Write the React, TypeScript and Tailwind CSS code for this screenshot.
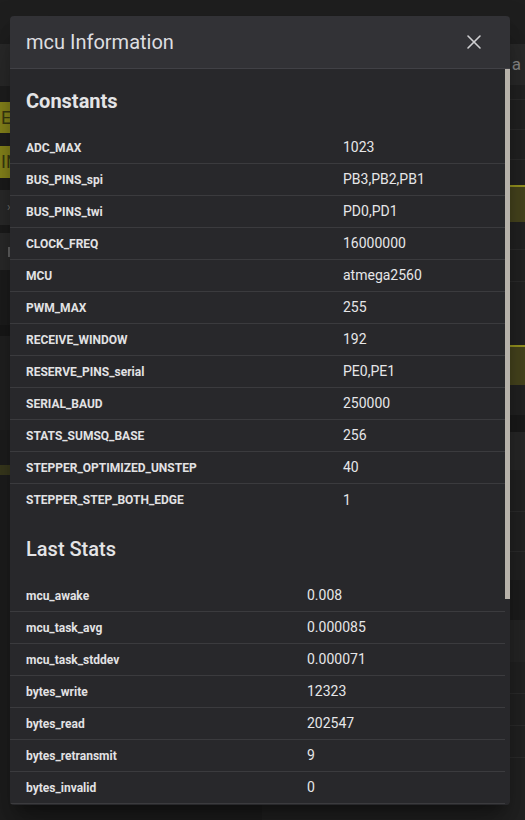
import { X } from "lucide-react";

const constants = [
  ["ADC_MAX", "1023"],
  ["BUS_PINS_spi", "PB3,PB2,PB1"],
  ["BUS_PINS_twi", "PD0,PD1"],
  ["CLOCK_FREQ", "16000000"],
  ["MCU", "atmega2560"],
  ["PWM_MAX", "255"],
  ["RECEIVE_WINDOW", "192"],
  ["RESERVE_PINS_serial", "PE0,PE1"],
  ["SERIAL_BAUD", "250000"],
  ["STATS_SUMSQ_BASE", "256"],
  ["STEPPER_OPTIMIZED_UNSTEP", "40"],
  ["STEPPER_STEP_BOTH_EDGE", "1"],
];

const stats = [
  ["mcu_awake", "0.008"],
  ["mcu_task_avg", "0.000085"],
  ["mcu_task_stddev", "0.000071"],
  ["bytes_write", "12323"],
  ["bytes_read", "202547"],
  ["bytes_retransmit", "9"],
  ["bytes_invalid", "0"],
];

function InfoTable({ rows, cols, lastBorder }: { rows: string[][]; cols: string; lastBorder?: boolean }) {
  return (
    <div>
      {rows.map(([k, v], i) => (
        <div
          key={k}
          className={`grid ${cols} h-[32px] items-center ${
            i < rows.length - 1 || lastBorder ? "border-b border-[#3b3b3e]" : ""
          }`}
        >
          <div className="pl-4 text-[12px] font-bold text-[#e2e2e4]">{k}</div>
          <div className="pl-4 text-[14px] text-[#e6e6e8]">{v}</div>
        </div>
      ))}
    </div>
  );
}

// dimmed dashboard that sits behind the dialog
function Backdrop() {
  return (
    <div className="flex flex-col h-[820px] bg-[#1e1e1e]">
      <div className="h-[44px] bg-[#1e1e1e]" />
      <div className="flex flex-1">
        <div className="w-[262px] flex flex-col">
          <div className="h-[42px] bg-[#2a2a2a]" />
          <div className="h-[16px] bg-[#1f1f1f]" />
          <div className="h-[31px] bg-[#8b891c] text-[#3a3a10] text-[18px] leading-[31px] pl-[1px]">E</div>
          <div className="h-[13px] bg-[#1f1f1f]" />
          <div className="h-[32px] bg-[#8b891c] text-[#3a3a10] text-[18px] leading-[32px] pl-[1px]">IN</div>
          <div className="h-[12px] bg-[#1c1c1c]" />
          <div className="h-[35px] bg-[#2b2b2b] text-[#777] text-[12px] leading-[35px] pl-[7px]">›</div>
          <div className="h-[8px] bg-[#1c1c1c]" />
          <div className="h-[37px] bg-[#2b2b2b] flex items-center pl-[8px]">
            <div className="w-[2px] h-[10px] bg-[#666]" />
          </div>
          <div className="h-[55px] bg-[#1d1d1d]" />
          <div className="h-[11px] bg-[#181818]" />
          <div className="h-[94px] bg-[#212121]" />
          <div className="h-[35px] bg-[#1e1e1e]" />
          <div className="h-[10px] bg-[#3a3a1e]" />
          <div className="flex-1 bg-[#1e1e1e]" />
        </div>
        <div className="flex-1 flex flex-col items-end">
          <div className="w-full h-[41px] bg-[#2a2a2a] text-right text-[#8c8c8c] text-[17px] leading-[41px] pr-[4px]">
            a
          </div>
          <div className="w-full h-[100px] bg-[#222] flex flex-col">
            <div className="h-[15px] border-b border-[#2c2c2c]" />
            <div className="h-[30px] border-b border-[#2c2c2c]" />
            <div className="h-[30px] border-b border-[#2c2c2c]" />
          </div>
          <div className="w-full h-[37px] bg-[#48461e] border-t-2 border-[#9a9820]" />
          <div className="w-full h-[123px] bg-[#222] flex flex-col">
            <div className="h-[28px] border-b border-[#2c2c2c]" />
            <div className="h-[32px] border-b border-[#2c2c2c]" />
          </div>
          <div className="w-full h-[40px] bg-[#48461e] border-t-2 border-[#9a9820]" />
          <div className="w-full h-[30px] bg-[#222]" />
          <div className="w-full h-[17px] bg-[#1a1a1a]" />
          <div className="w-full h-[38px] bg-[#282828]" />
          <div className="w-full h-[110px] bg-[#222] flex flex-col">
            <div className="h-[42px] border-b border-[#2c2c2c]" />
            <div className="h-[40px] border-b border-[#2c2c2c]" />
          </div>
          <div className="w-full h-[40px] bg-[#1d1d1d]" />
          <div className="w-full h-[42px] bg-[#262626] flex items-center">
            <div className="ml-[8px] w-[2px] h-[10px] bg-[#555]" />
          </div>
          <div className="w-full flex-1 bg-[#222] flex flex-col">
            <div className="h-[32px] border-b border-[#2c2c2c]" />
            <div className="h-[32px] border-b border-[#2c2c2c]" />
            <div className="h-[32px] border-b border-[#2c2c2c]" />
          </div>
        </div>
      </div>
    </div>
  );
}

export default function App() {
  return (
    <div className="relative w-[525px] h-[820px] overflow-hidden font-['Roboto','Liberation_Sans',sans-serif]">
      <Backdrop />

      {/* dialog */}
      <div className="absolute left-[10px] top-[16px] w-[500px] h-[789px] rounded-[4px] overflow-hidden flex flex-col shadow-[0_11px_15px_-7px_rgba(0,0,0,0.4),0_24px_38px_3px_rgba(0,0,0,0.28)]">
        <div className="h-[53px] shrink-0 flex items-center justify-between pl-4 pr-[24px] bg-[#323236] border-b border-[#414146]">
          <span className="text-[20px] text-[#dedee0]">mcu Information</span>
          <X size={24} strokeWidth={1.6} className="text-[#d0d0d2]" />
        </div>

        <div className="relative flex-1 bg-[#28282b] overflow-hidden">
          <div className="mr-[5px]">
            <h3 className="pl-4 pt-[18px] pb-[17px] text-[20px] leading-[28px] font-bold text-[#e4e4e6]">
              Constants
            </h3>
            <InfoTable rows={constants} cols="grid-cols-[317px_1fr]" />
            <h3 className="pl-4 pt-[19px] pb-[17px] text-[20px] leading-[28px] font-medium text-[#e4e4e6]">
              Last Stats
            </h3>
            <InfoTable rows={stats} cols="grid-cols-[281px_1fr]" lastBorder />
          </div>
          {/* scrollbar thumb */}
          <div className="absolute right-0 top-0 w-[5px] h-[530px] bg-[#b7b2aa]" />
        </div>
      </div>
    </div>
  );
}
